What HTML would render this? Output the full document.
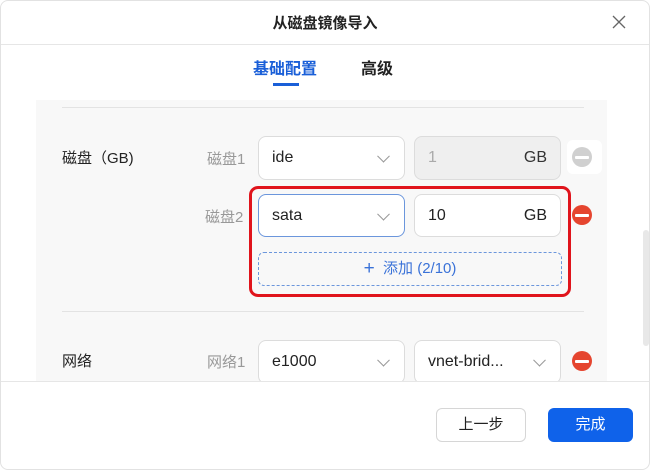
<!DOCTYPE html><html><head><meta charset="utf-8"><style>
*{box-sizing:border-box;margin:0;padding:0}
body{width:650px;height:470px;background:#fff;font-family:"Liberation Sans","Noto Sans CJK SC",sans-serif;position:relative;overflow:hidden;color:#222}
.a{position:absolute}
.box{position:absolute;border:1px solid #dcdcdc;border-radius:8px;background:#fff;font-size:16px;padding-left:13px;display:flex;align-items:center}
.chev{position:absolute;right:16px;top:50%;width:9px;height:9px;border-right:1.2px solid #999;border-bottom:1.2px solid #999;transform:translateY(-70%) rotate(45deg)}
.lbl{position:absolute;font-size:15px;color:#999}
.minus{position:absolute;width:20px;height:20px;border-radius:50%;background:#e5452f}
.minus:after{content:"";position:absolute;left:3px;right:3px;top:8.5px;height:3px;background:#fff;border-radius:1px}
</style></head><body>
<div class="a" style="left:0;top:0;width:650px;height:470px;border:1px solid #e2e2e2;border-radius:8px"></div>
<div class="a" style="left:0;top:12px;width:650px;text-align:center;font-size:15px;font-weight:bold">从磁盘镜像导入</div>
<svg class="a" style="left:612px;top:15px" width="14" height="14"><path d="M1 1L13 13M13 1L1 13" stroke="#666" stroke-width="1.3"/></svg>
<div class="a" style="left:1px;top:44px;width:648px;height:1px;background:#e6e6e6"></div>
<div class="a" style="left:253px;top:55px;font-size:16px;font-weight:bold;color:#1a5fd8">基础配置</div>
<div class="a" style="left:361px;top:55px;font-size:16px;font-weight:bold">高级</div>
<div class="a" style="left:273px;top:83px;width:26px;height:3px;background:#1a5fd8"></div>
<div class="a" style="left:36px;top:100px;width:571px;height:281px;background:#f8f8f8"></div>
<div class="a" style="left:62px;top:107px;width:522px;height:1px;background:#e3e3e3"></div>
<div class="a" style="left:62px;top:147px;font-size:15px">磁盘（GB)</div>
<div class="lbl" style="left:207px;top:148px">磁盘1</div>
<div class="box" style="left:258px;top:136px;width:147px;height:44px">ide<span class="chev"></span></div>
<div class="box" style="left:414px;top:136px;width:147px;height:44px;background:#efefef;color:#aaa">1<span style="position:absolute;right:13px;color:#333">GB</span></div>
<div class="a" style="left:567px;top:140px;width:35px;height:34px;background:#fff;border-radius:6px"></div>
<div class="minus" style="left:572px;top:147px;background:#d0d0d0"></div>
<div class="lbl" style="left:205px;top:206px">磁盘2</div>
<div class="box" style="left:258px;top:194px;width:147px;height:43px;border-color:#6b96dc">sata<span class="chev"></span></div>
<div class="box" style="left:414px;top:194px;width:147px;height:43px">10<span style="position:absolute;right:13px">GB</span></div>
<div class="minus" style="left:572px;top:205px"></div>
<div class="a" style="left:258px;top:252px;width:304px;height:34px;border:1.5px dashed #6b96dc;border-radius:6px;text-align:center;line-height:31px;color:#3a72d8;font-size:15px"><span style="font-size:19px;vertical-align:-1px">+</span>&nbsp; 添加 (2/10)</div>
<div class="a" style="left:249px;top:186px;width:322px;height:111px;border:3px solid #e0141c;border-radius:9px"></div>
<div class="a" style="left:62px;top:311px;width:522px;height:1px;background:#e3e3e3"></div>
<div class="a" style="left:62px;top:350px;font-size:15px">网络</div>
<div class="lbl" style="left:207px;top:351px">网络1</div>
<div class="box" style="left:258px;top:340px;width:147px;height:44px">e1000<span class="chev"></span></div>
<div class="box" style="left:414px;top:340px;width:147px;height:44px">vnet-brid...<span class="chev"></span></div>
<div class="minus" style="left:572px;top:351px"></div>
<div class="a" style="left:1px;top:381px;width:648px;height:88px;background:#fff;border-top:1px solid #e6e6e6;border-radius:0 0 8px 8px"></div>
<div class="a" style="left:643px;top:230px;width:6px;height:116px;background:#e8e8e8;border-radius:3px"></div>
<div class="a" style="left:436px;top:408px;width:90px;height:34px;border:1px solid #d6d6d6;border-radius:6px;text-align:center;line-height:32px;font-size:15px">上一步</div>
<div class="a" style="left:548px;top:408px;width:85px;height:34px;background:#0f62ea;border-radius:6px;text-align:center;line-height:34px;font-size:15px;color:#fff">完成</div>
</body></html>
